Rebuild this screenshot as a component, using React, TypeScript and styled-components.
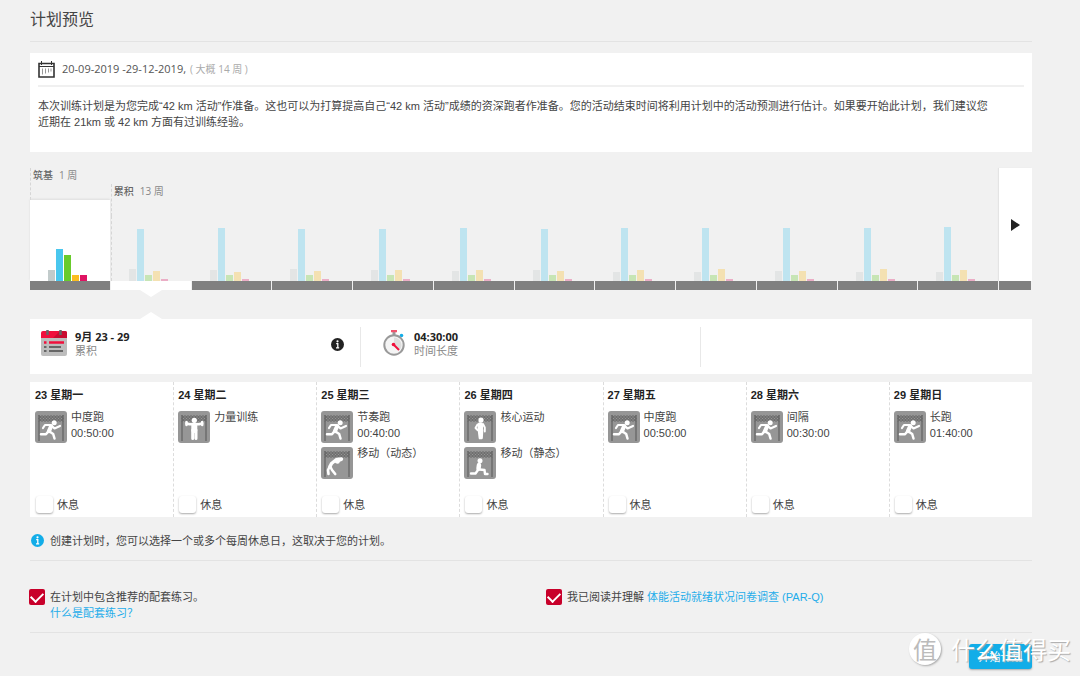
import React from "react";
import styled, { createGlobalStyle, css } from "styled-components";

const sans = `"Liberation Sans", "Noto Sans CJK SC", sans-serif`;
const open = `"Open Sans", "Noto Sans CJK SC", sans-serif`;

const Global = createGlobalStyle`
  * { box-sizing: border-box; }
  body {
    margin: 0;
    background: #f1f1f1;
    color: #444;
    font: 11px/16px ${sans};
  }
  a { color: #1fadea; text-decoration: none; }
  svg { display: block; flex: none; }
`;

const Page = styled.main`
  position: relative;
  padding: 7px 48px 6px 30px;
`;
const Title = styled.h1`
  margin: 0 0 11px;
  height: 35px;
  border-bottom: 1px solid #e3e3e3;
  font: 400 16px/24px ${open};
  color: #444;
`;
const Card = styled.section`
  background: #fff;
`;
const Summary = styled(Card)`
  height: 99px;
  padding: 0 8px;
`;
const Dates = styled.div`
  display: flex;
  align-items: center;
  height: 34px;
  border-bottom: 2px solid #f0f0f0;
  font: 11px/16px ${open};
  color: #555;
  svg { margin-right: 7px; }
`;
const Approx = styled.span`
  margin-left: 4px;
  color: #aaa;
  font-size: 10px;
`;
const Intro = styled.p`
  margin: 11px 0 0;
`;

const Timeline = styled.section`
  display: grid;
  grid-template-columns: repeat(12, 1fr) 33px;
  height: 122px;
  margin-top: 16px;
`;
const Week = styled.div<{ $first?: boolean }>`
  display: flex;
  flex-direction: column;
  min-width: 0;
  ${(p) => !p.$first && css`margin-top: 16px;`}
`;
const Phase = styled.div`
  padding-left: 2px;
  height: 32px;
  border-left: 1px dashed #d6d6d6;
  font: 10px/14px ${open};
  color: #888;
  white-space: nowrap;
  b { margin-right: 6px; color: #666; font-weight: 500; }
`;
const Bars = styled.div<{ $current?: boolean; $marked?: boolean }>`
  flex: 1;
  display: flex;
  align-items: flex-end;
  gap: 1px;
  padding-left: 18px;
  ${(p) => p.$current && css`
    margin-right: 1px;
    background: #fff;
    box-shadow: 0 -1px 2px #ddd;
  `}
  ${(p) => p.$marked && css`
    padding-left: 17px;
    border-left: 1px dashed #d6d6d6;
  `}
`;
const Bar = styled.i<{ $h: number; $c: string; $faded: boolean }>`
  width: 7px;
  height: ${(p) => p.$h}px;
  background: ${(p) => p.$c};
  opacity: ${(p) => (p.$faded ? 0.3 : 1)};
`;
const Track = styled.div<{ $selected?: boolean }>`
  position: relative;
  height: 9px;
  border-right: 1px solid #f1f1f1;
  background: ${(p) => (p.$selected ? "#fff" : "#808080")};
  ${(p) => p.$selected && css`
    &::after {
      content: "";
      position: absolute;
      top: 9px;
      left: calc(50% - 11px);
      border: 11px solid transparent;
      border-top: 7px solid #fff;
      border-bottom: 0;
    }
  `}
`;
const NextColumn = styled.div`
  display: flex;
  flex-direction: column;
`;
const Next = styled.button`
  flex: 1;
  display: flex;
  align-items: center;
  justify-content: center;
  border: 0;
  padding: 0;
  background: #fff;
  box-shadow: -1px 0 1px #e4e4e4;
`;

const Details = styled(Card)`
  position: relative;
  display: grid;
  grid-template-columns: 331px 340px 1fr;
  height: 55px;
  margin-top: 29px;
  padding: 8px 0;
  &::before {
    content: "";
    position: absolute;
    top: -7px;
    left: 110px;
    border: 11px solid transparent;
    border-bottom: 7px solid #fff;
    border-top: 0;
  }
`;
const Detail = styled.div`
  display: flex;
  align-items: flex-start;
  height: 40px;
  padding: 3px 16px 0 11px;
  border-right: 1px solid #e8e8e8;
  & + & { padding-left: 22px; }
`;
const DetailText = styled.div`
  flex: 1;
  margin-left: 8px;
  font: 11px/14px ${open};
  color: #888;
  strong { display: block; color: #222; }
`;
const InfoSlot = styled.span`
  padding-top: 8px;
`;

const Days = styled(Card)`
  display: grid;
  grid-template-columns: repeat(7, 1fr);
  height: 135px;
  margin-top: 8px;
`;
const Day = styled.article`
  display: flex;
  flex-direction: column;
  padding: 5px 0 4px 5px;
  & + & { border-left: 1px dashed #dcdcdc; padding-left: 4px; }
`;
const DayName = styled.h2`
  margin: 0 0 8px;
  font: 700 11px/16px ${sans};
  color: #222;
`;
const Workout = styled.div`
  display: flex;
  gap: 4px;
  height: 36px;
`;
const WorkoutText = styled.div`
  margin-top: -2px;
`;
const Rest = styled.label`
  display: flex;
  align-items: center;
  gap: 4px;
  margin-top: auto;
`;
const RestBox = styled.input`
  appearance: none;
  width: 17px;
  height: 17px;
  margin: 0 0 0 1px;
  border-radius: 3px;
  background: #fff;
  box-shadow: 0 1px 2px #aaa;
`;

const Hint = styled.p`
  display: flex;
  align-items: center;
  gap: 6px;
  height: 44px;
  margin: 0;
  padding: 4px 0 0 1px;
  border-bottom: 1px solid #e3e3e3;
`;
const Agreements = styled.section`
  display: grid;
  grid-template-columns: 517px 1fr;
  height: 72px;
  padding-top: 28px;
  border-bottom: 1px solid #e3e3e3;
`;
const Agreement = styled.div`
  display: flex;
  gap: 5px;
  margin-left: -1px;
`;
const Tick = styled.input`
  appearance: none;
  display: grid;
  place-items: center;
  width: 16px;
  height: 16px;
  margin: 0;
  border-radius: 2px;
  background: #c8002a;
  &:checked::after {
    content: "";
    width: 10px;
    height: 6px;
    margin-top: -3px;
    border: solid #fff;
    border-width: 0 0 2px 2px;
    transform: rotate(-45deg);
  }
`;
const Actions = styled.footer`
  display: flex;
  justify-content: flex-end;
  padding-top: 11px;
`;
const Start = styled.button`
  width: 63px;
  height: 25px;
  padding: 0;
  border: 0;
  border-radius: 3px;
  background: #12ade8;
  box-shadow: 0 1px 2px #aaa;
  color: #fff;
  font: 11px/16px ${sans};
`;
const Watermark = styled.div`
  position: absolute;
  right: 9px;
  bottom: 9px;
  display: flex;
  align-items: center;
  gap: 10px;
  color: #fff;
  font: 24px/34px "Noto Sans CJK SC", sans-serif;
  text-shadow: 1px 1px 1px #aaa;
  pointer-events: none;
`;
const Seal = styled.span`
  width: 32px;
  height: 32px;
  border-radius: 50%;
  background: #fff;
  box-shadow: 1px 1px 2px #aaa;
  color: #bbb;
  font-size: 24px;
  line-height: 31px;
  text-align: center;
  text-shadow: none;
`;

const CalendarOutline = () => (
  <svg width="17" height="17" viewBox="0 0 17 17" fill="none" stroke="#333">
    <path d="M1 2.5h15v13.5H1z" strokeWidth="1.6" />
    <path d="M1 5.5h15M3.5 0v4M13.500 0v4" />
    <path d="M4.5 7.5v6M7.5 7.5v5M10.5 7.5v4M13 7.5v3" stroke="#999" />
  </svg>
);
const CalendarColor = () => (
  <svg width="26" height="27" viewBox="0 0 26 27">
    <path d="M0 8h26v16a2 2 0 0 1-2 2H2a2 2 0 0 1-2-2z" fill="#bdbdbd" />
    <path d="M0 3q0-2 2-2h22q2 0 2 2v5H0z" fill="#f00f3c" />
    <path d="M19 1h5q2 0 2 2v5H12z" fill="#c90b30" />
    <path d="M6.5 0v5M19.5 0v5" stroke="#666" strokeWidth="2.5" />
    <path d="M3 12.5h2.5M8 12.5h15" stroke="#f00f3c" strokeWidth="2.5" />
    <path d="M3 17h2.5M8 17h12M3 21h2.5M8 21h14" stroke="#666" strokeWidth="2.2" />
  </svg>
);
const Stopwatch = () => (
  <svg width="23" height="27" viewBox="0 0 23 27">
    <path d="M11 1v5" stroke="#999" strokeWidth="3" />
    <path d="M8 1h6" stroke="#f0546e" strokeWidth="2.5" />
    <circle cx="18.5" cy="5.5" r="1.8" fill="#12ade8" />
    <circle cx="11" cy="15" r="9.7" fill="#f4f4f4" stroke="#999" strokeWidth="2" />
    <path d="M11 15V7.5a7.500 7.500 0 0 1 5.500 12.500z" fill="#ddd" />
    <path d="m10.500 14.500 5.500 5.500" stroke="#f00f3c" strokeWidth="2" />
    <circle cx="10.5" cy="14.5" r="1.8" fill="#f00f3c" />
  </svg>
);
const Info = ({ color }: { color: string }) => (
  <svg width="13" height="13" viewBox="0 0 13 13">
    <circle cx="6.5" cy="6.5" r="6.5" fill={color} />
    <path d="M5.2 5.7h1.6V9.6M5 9.800h3.200" stroke="#fff" strokeWidth="1.3" fill="none" />
    <circle cx="6.5" cy="3.3" r="1.1" fill="#fff" />
  </svg>
);

type Kind = "run" | "strength" | "dynamic" | "core" | "static";
const figures: Record<Kind, React.ReactNode> = {
  run: (
    <>
      <circle cx="19.2" cy="11.800" r="2.500" fill="#fff" stroke="none" />
      <path d="M8 17l2-3h6l3.500 3.500 5.500-2.500" strokeWidth="2.2" />
      <path d="M16 15.500l-2 4.500" strokeWidth="4.2" />
      <path d="M13.200 20.500l-2.200 2.700H6M14.500 20.500l3.700 2.500 1.300 4.500" strokeWidth="2.500" />
    </>
  ),
  strength: (
    <>
      <circle cx="16.300" cy="9.300" r="2.600" fill="#fff" stroke="none" />
      <path d="M8.500 12.500l3 .8h9.600l3-.8" strokeWidth="2.500" />
      <path d="M8.500 11v3M24.200 11v3" strokeWidth="2.500" />
      <path d="M16.300 14.500v4.500" strokeWidth="6" />
      <path d="M14.700 19v8.500M18 19v8.500" strokeWidth="3" />
    </>
  ),
  dynamic: (
    <>
      <circle cx="16.500" cy="14.500" r="2.300" fill="#fff" stroke="none" />
      <path d="M20.500 12l-5 .5-5 4-1.500 3" strokeWidth="3.400" />
      <path d="M9 19l-2 4 .5 4M9.500 20l1.500 3 3.200 4" strokeWidth="2.600" />
      <path d="M15 15l5.500-2" strokeWidth="2" />
    </>
  ),
  core: (
    <>
      <circle cx="17" cy="9" r="2.600" fill="#fff" stroke="none" />
      <path d="M16.300 14v5" strokeWidth="5.500" />
      <path d="M13.500 13.500l-2 3.500 2 2M19 13l1.800 3.500v4" strokeWidth="1.900" />
      <path d="M15 19l1 8M18 19l-.5 8" strokeWidth="2.700" />
    </>
  ),
  static: (
    <>
      <circle cx="16" cy="13.800" r="2.500" fill="#fff" stroke="none" />
      <path d="M15 18l-.5 3.500" strokeWidth="4.500" />
      <path d="M14 23l-2.500 3.500H7M15.500 22.500l5 .5.500 4h2.500" strokeWidth="2.400" />
    </>
  ),
};
const WorkoutIcon = ({ kind }: { kind: Kind }) => (
  <svg width="32" height="32" viewBox="0 0 32 32">
    <rect width="32" height="32" rx="3" fill="#969696" />
    <path d="M4 4v26M28 4v26" stroke="#666" strokeWidth="1.300" />
    <path
      d="M4 4.500l3 3 3-3 3 3 3-3 3 3 3-3 3 3 3-3M4 7.500l3-3 3 3 3-3 3 3 3-3 3 3 3-3 3 3M4 7.500l3 3 3-3 3 3 3-3 3 3 3-3 3 3 3-3M4 10.500l3-3 3 3 3-3 3 3 3-3 3 3 3-3 3 3"
      fill="none"
      stroke="#5c5c5c"
      strokeWidth="0.9"
    />
    <g fill="none" stroke="#fff" strokeLinecap="round" strokeLinejoin="round">{figures[kind]}</g>
  </svg>
);

const barColors = ["#c2cbcb", "#49c7ee", "#68cb2c", "#fbbd20", "#df1462"];
const weeks = [
  [11, 32, 26, 6, 6],
  [12, 52, 6, 10, 2],
  [11, 53, 6, 9, 2],
  [12, 52, 6, 10, 2],
  [11, 52, 6, 11, 2],
  [10, 53, 6, 11, 2],
  [11, 52, 6, 10, 2],
  [9, 53, 6, 11, 2],
  [9, 53, 6, 12, 2],
  [10, 53, 6, 10, 2],
  [9, 53, 6, 12, 2],
  [9, 54, 6, 11, 2],
];

const days: { name: string; items: { kind: Kind; text: string; time?: string }[] }[] = [
  { name: "23 星期一", items: [{ kind: "run", text: "中度跑", time: "00:50:00" }] },
  { name: "24 星期二", items: [{ kind: "strength", text: "力量训练" }] },
  {
    name: "25 星期三",
    items: [
      { kind: "run", text: "节奏跑", time: "00:40:00" },
      { kind: "dynamic", text: "移动（动态）" },
    ],
  },
  {
    name: "26 星期四",
    items: [
      { kind: "core", text: "核心运动" },
      { kind: "static", text: "移动（静态）" },
    ],
  },
  { name: "27 星期五", items: [{ kind: "run", text: "中度跑", time: "00:50:00" }] },
  { name: "28 星期六", items: [{ kind: "run", text: "间隔", time: "00:30:00" }] },
  { name: "29 星期日", items: [{ kind: "run", text: "长跑", time: "01:40:00" }] },
];

export default function App() {
  return (
    <>
      <Global />
      <Page>
        <Title>计划预览</Title>
        <Summary>
          <Dates>
            <CalendarOutline />
            20-09-2019 -29-12-2019,
            <Approx>( 大概 14 周 )</Approx>
          </Dates>
          <Intro>
            本次训练计划是为您完成“42 km 活动”作准备。这也可以为打算提高自己“42 km 活动”成绩的资深跑者作准备。您的活动结束时间将利用计划中的活动预测进行估计。如果要开始此计划，我们建议您
            <br />
            近期在 21km 或 42 km 方面有过训练经验。
          </Intro>
        </Summary>

        <Timeline>
          {weeks.map((heights, i) => (
            <Week key={i} $first={i === 0}>
              {i === 0 && <Phase><b>筑基</b>1 周</Phase>}
              {i === 1 && <Phase><b>累积</b>13 周</Phase>}
              <Bars $current={i === 0} $marked={i === 1}>
                {heights.map((h, k) => <Bar key={k} $h={h} $c={barColors[k]} $faded={i > 0} />)}
              </Bars>
              <Track $selected={i === 1} />
            </Week>
          ))}
          <NextColumn>
            <Next aria-label="下一页">
              <svg width="9" height="12" viewBox="0 0 9 12"><path d="M0 0l9 6-9 6z" fill="#222" /></svg>
            </Next>
            <Track />
          </NextColumn>
        </Timeline>

        <Details>
          <Detail>
            <CalendarColor />
            <DetailText><strong>9月 23 - 29</strong>累积</DetailText>
            <InfoSlot><Info color="#222" /></InfoSlot>
          </Detail>
          <Detail>
            <Stopwatch />
            <DetailText><strong>04:30:00</strong>时间长度</DetailText>
          </Detail>
        </Details>

        <Days>
          {days.map((day) => (
            <Day key={day.name}>
              <DayName>{day.name}</DayName>
              {day.items.map((item) => (
                <Workout key={item.text}>
                  <WorkoutIcon kind={item.kind} />
                  <WorkoutText>
                    {item.text}
                    {item.time && <div>{item.time}</div>}
                  </WorkoutText>
                </Workout>
              ))}
              <Rest><RestBox type="checkbox" />休息</Rest>
            </Day>
          ))}
        </Days>

        <Hint><Info color="#12ade8" />创建计划时，您可以选择一个或多个每周休息日，这取决于您的计划。</Hint>

        <Agreements>
          <Agreement>
            <Tick type="checkbox" id="drills" defaultChecked />
            <div>
              <label htmlFor="drills">在计划中包含推荐的配套练习。</label>
              <br />
              <a href="#drills-info">什么是配套练习？</a>
            </div>
          </Agreement>
          <Agreement>
            <Tick type="checkbox" id="parq" defaultChecked />
            <div>
              <label htmlFor="parq">我已阅读并理解</label>{" "}
              <a href="#par-q">体能活动就绪状况问卷调查 (PAR-Q)</a>
            </div>
          </Agreement>
        </Agreements>

        <Actions><Start>开始计划</Start></Actions>
        <Watermark><Seal>值</Seal>什么值得买</Watermark>
      </Page>
    </>
  );
}
